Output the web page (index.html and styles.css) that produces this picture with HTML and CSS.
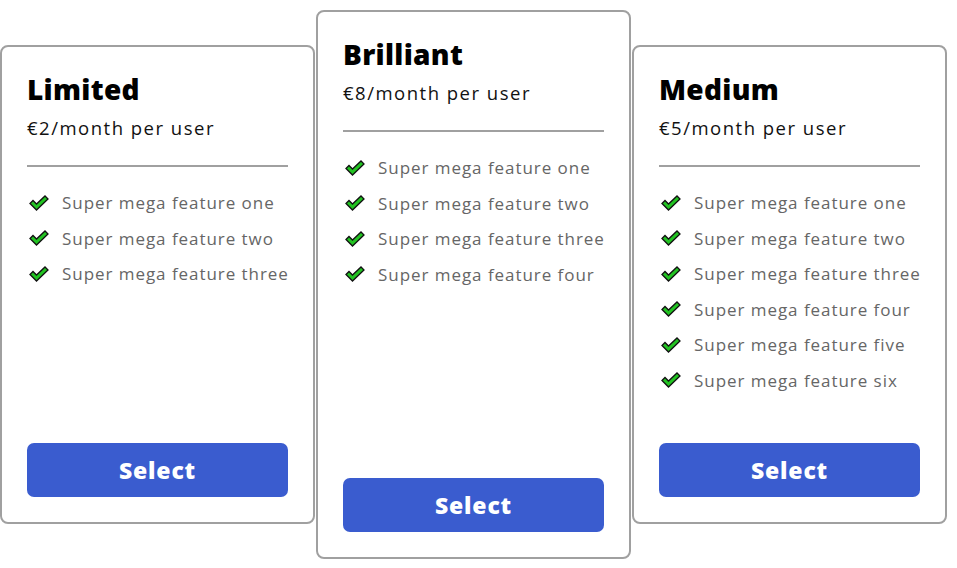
FILE: index.html
```html
<!DOCTYPE html>
<html lang="en">
<head>
<meta charset="utf-8">
<title>Pricing</title>
<link rel="stylesheet" href="styles.css">
</head>
<body>
<main class="plans">
  <section class="card card-side">
    <h2 class="title">Limited</h2>
    <p class="price">€2/month per user</p>
    <hr class="divider">
    <ul class="features">
      <li><svg class="check" viewBox="0 0 20 16"><polygon points="1,8.5 4,5.5 7.5,9 16,1 19,4 7.5,15" /></svg>Super mega feature one</li>
      <li><svg class="check" viewBox="0 0 20 16"><polygon points="1,8.5 4,5.5 7.5,9 16,1 19,4 7.5,15" /></svg>Super mega feature two</li>
      <li><svg class="check" viewBox="0 0 20 16"><polygon points="1,8.5 4,5.5 7.5,9 16,1 19,4 7.5,15" /></svg>Super mega feature three</li>
    </ul>
    <button class="select">Select</button>
  </section>
  <section class="card card-main">
    <h2 class="title">Brilliant</h2>
    <p class="price">€8/month per user</p>
    <hr class="divider">
    <ul class="features">
      <li><svg class="check" viewBox="0 0 20 16"><polygon points="1,8.5 4,5.5 7.5,9 16,1 19,4 7.5,15" /></svg>Super mega feature one</li>
      <li><svg class="check" viewBox="0 0 20 16"><polygon points="1,8.5 4,5.5 7.5,9 16,1 19,4 7.5,15" /></svg>Super mega feature two</li>
      <li><svg class="check" viewBox="0 0 20 16"><polygon points="1,8.5 4,5.5 7.5,9 16,1 19,4 7.5,15" /></svg>Super mega feature three</li>
      <li><svg class="check" viewBox="0 0 20 16"><polygon points="1,8.5 4,5.5 7.5,9 16,1 19,4 7.5,15" /></svg>Super mega feature four</li>
    </ul>
    <button class="select">Select</button>
  </section>
  <section class="card card-side">
    <h2 class="title">Medium</h2>
    <p class="price">€5/month per user</p>
    <hr class="divider">
    <ul class="features">
      <li><svg class="check" viewBox="0 0 20 16"><polygon points="1,8.5 4,5.5 7.5,9 16,1 19,4 7.5,15" /></svg>Super mega feature one</li>
      <li><svg class="check" viewBox="0 0 20 16"><polygon points="1,8.5 4,5.5 7.5,9 16,1 19,4 7.5,15" /></svg>Super mega feature two</li>
      <li><svg class="check" viewBox="0 0 20 16"><polygon points="1,8.5 4,5.5 7.5,9 16,1 19,4 7.5,15" /></svg>Super mega feature three</li>
      <li><svg class="check" viewBox="0 0 20 16"><polygon points="1,8.5 4,5.5 7.5,9 16,1 19,4 7.5,15" /></svg>Super mega feature four</li>
      <li><svg class="check" viewBox="0 0 20 16"><polygon points="1,8.5 4,5.5 7.5,9 16,1 19,4 7.5,15" /></svg>Super mega feature five</li>
      <li><svg class="check" viewBox="0 0 20 16"><polygon points="1,8.5 4,5.5 7.5,9 16,1 19,4 7.5,15" /></svg>Super mega feature six</li>
    </ul>
    <button class="select">Select</button>
  </section>
</main>
</body>
</html>
```
FILE: styles.css
```css
* { box-sizing: border-box; }
html, body { margin: 0; padding: 0; background: #fff; }
body { font-family: "Open Sans", "Liberation Sans", sans-serif; overflow: hidden; }
.plans {
  height: 569px;
  display: flex;
  align-items: center;
  gap: 1px;
}
.card {
  width: 315px;
  flex: none;
  border: 2px solid #a0a0a0;
  border-radius: 8px;
  padding: 25px;
  display: flex;
  flex-direction: column;
  background: #fff;
}
.card-side { height: 479px; }
.card-main { height: 549px; }
.title {
  margin: 0;
  font-size: 28px;
  line-height: 34px;
  font-weight: 800;
  color: #000;
  letter-spacing: 0.3px;
}
.price {
  margin: 10px 0 0;
  font-size: 18.5px;
  line-height: 24px;
  color: #111;
  letter-spacing: 1.5px;
  white-space: nowrap;
}
.divider {
  margin: 25px 0 0;
  border: 0;
  border-top: 2px solid #a0a0a0;
  height: 0;
}
.features {
  list-style: none;
  margin: 18px 0 0;
  padding: 0;
}
.features li {
  display: flex;
  align-items: center;
  height: 35.5px;
  font-size: 17px;
  color: #666;
  letter-spacing: 0.95px;
  white-space: nowrap;
}
.check {
  width: 20px;
  height: 16px;
  margin: 0 13px 0 2px;
  flex: none;
}
.check polygon {
  fill: #22c322;
  stroke: #111;
  stroke-width: 1.3;
  stroke-linejoin: miter;
}
.select {
  margin-top: auto;
  height: 54px;
  width: 100%;
  border: 0;
  border-radius: 7px;
  background: #3a5ccf;
  color: #fff;
  font-family: "Open Sans", "Liberation Sans", sans-serif;
  font-size: 23px;
  font-weight: 800;
  letter-spacing: 0.8px;
  cursor: pointer;
}
```
